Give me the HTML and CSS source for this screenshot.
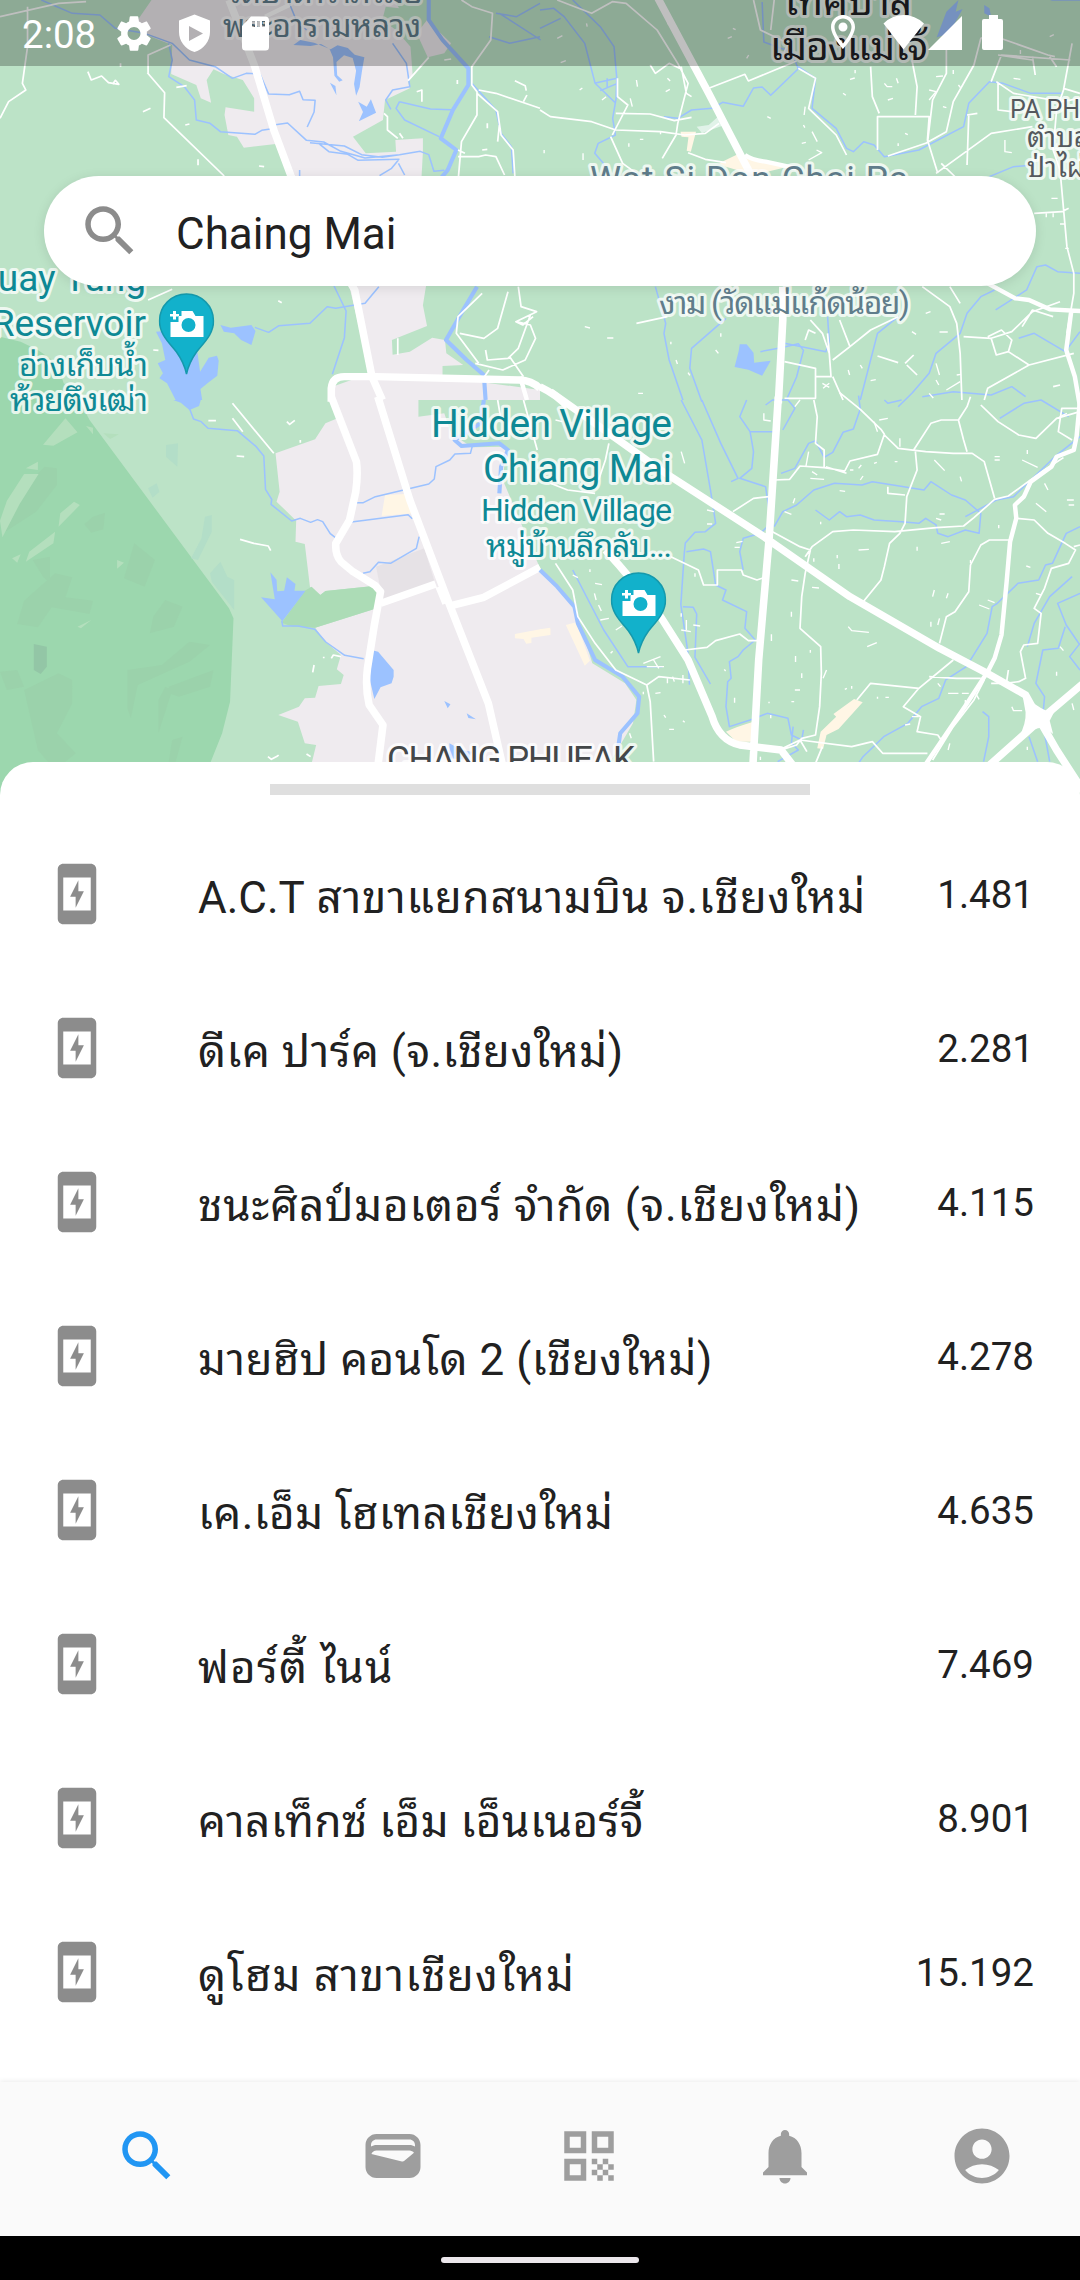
FILE: index.html
```html
<!DOCTYPE html>
<html lang="th">
<head>
<meta charset="utf-8">
<title>Charging stations</title>
<link rel="stylesheet" href="styles.css">
</head>
<body>
<svg class="defs" width="0" height="0" aria-hidden="true">
  <symbol id="i-search" viewBox="0 0 24 24"><path d="M15.5 14h-.79l-.28-.27C15.41 12.59 16 11.11 16 9.5 16 5.91 13.09 3 9.5 3S3 5.91 3 9.5 5.91 16 9.5 16c1.61 0 3.09-.59 4.23-1.57l.27.28v.79l5 4.99L20.49 19l-4.99-5zm-6 0C7.01 14 5 11.99 5 9.5S7.01 5 9.5 5 14 7.01 14 9.5 11.99 14 9.5 14z"/></symbol>
  <symbol id="i-charge" viewBox="0 0 24 24"><path d="M14.5 11l-3 6v-4h-2l3-6v4h2zM17 1H7c-1.1 0-2 .9-2 2v18c0 1.1.9 2 2 2h10c1.1 0 2-.9 2-2V3c0-1.1-.9-2-2-2zm0 17H7V6h10v12z"/></symbol>
  <symbol id="i-wallet" viewBox="0 0 24 24"><path fill-rule="evenodd" d="M18 4H6C3.79 4 2 5.79 2 8v8c0 2.21 1.79 4 4 4h12c2.21 0 4-1.79 4-4V8c0-2.21-1.79-4-4-4zm-1.86 9.77c-.24.2-.57.28-.88.2L4.15 11.25C4.45 10.52 5.16 10 6 10h12c.67 0 1.26.34 1.63.84l-3.49 2.93zM6 6h12c1.1 0 2 .9 2 2v.55c-.59-.34-1.27-.55-2-.55H6c-.73 0-1.41.21-2 .55V8c0-1.1.9-2 2-2z"/></symbol>
  <symbol id="i-qr" viewBox="0 0 24 24"><path fill-rule="evenodd" d="M3 11h8V3H3v8zm2-6h4v4H5V5zM3 21h8v-8H3v8zm2-6h4v4H5v-4zM13 3v8h8V3h-8zm6 6h-4V5h4v4zM19 19h2v2h-2zM13 13h2v2h-2zM15 15h2v2h-2zM13 17h2v2h-2zM15 19h2v2h-2zM17 17h2v2h-2zM17 13h2v2h-2zM19 15h2v2h-2z"/></symbol>
  <symbol id="i-bell" viewBox="0 0 24 24"><path d="M12 22c1.1 0 2-.9 2-2h-4c0 1.1.89 2 2 2zm6-6v-5c0-3.07-1.64-5.64-4.5-6.32V4c0-.83-.67-1.5-1.5-1.5s-1.5.67-1.5 1.5v.68C7.63 5.36 6 7.92 6 11v5l-2 2v1h16v-1l-2-2z"/></symbol>
  <symbol id="i-account" viewBox="0 0 24 24"><path fill-rule="evenodd" d="M12 2C6.48 2 2 6.48 2 12s4.480 10 10 10 10-4.480 10-10S17.520 2 12 2zM12 6c1.930 0 3.500 1.570 3.500 3.500S13.930 13 12 13s-3.500-1.570-3.500-3.500S10.070 6 12 6zM12 20c-2.030 0-4.430-.82-6.140-2.880C7.550 15.800 9.680 15 12 15s4.450.8 6.140 2.120C16.430 19.180 14.030 20 12 20z"/></symbol>
  <symbol id="i-gear" viewBox="0 0 24 24"><path d="M19.14 12.94c.04-.3.06-.61.06-.94 0-.32-.02-.64-.07-.94l2.030-1.580c.18-.14.23-.41.12-.61l-1.920-3.320c-.12-.22-.37-.29-.59-.22l-2.390.96c-.5-.38-1.030-.7-1.620-.94l-.36-2.540c-.04-.24-.24-.41-.48-.41h-3.840c-.24 0-.43.17-.47.41l-.36 2.540c-.59.24-1.130.57-1.620.94l-2.390-.96c-.22-.08-.47 0-.59.22L2.740 8.870c-.12.21-.08.47.12.61l2.030 1.580c-.05.3-.09.63-.09.94s.02.64.07.94l-2.030 1.580c-.18.14-.23.41-.12.61l1.920 3.320c.12.22.37.29.59.22l2.390-.96c.5.38 1.030.7 1.620.94l.36 2.540c.05.24.24.41.48.41h3.840c.24 0 .44-.17.47-.41l.36-2.540c.59-.24 1.130-.56 1.620-.94l2.390.96c.22.08.47 0 .59-.22l1.920-3.320c.12-.22.07-.47-.12-.61l-2.010-1.580zM12 15.600c-1.980 0-3.600-1.620-3.600-3.600s1.620-3.600 3.600-3.600 3.600 1.620 3.600 3.600-1.620 3.600-3.600 3.600z"/></symbol>
  <symbol id="pin" viewBox="0 0 56 82">
    <path class="pin-body" d="M28 1C13 1 1 13 1 28c0 13 9 21 17 31 5 7 8 13 10 22 2-9 5-15 10-22 8-10 17-18 17-31C55 13 43 1 28 1z"/>
    <path class="pin-glyph" fill-rule="evenodd" d="M23 18h11l3 5h8v21H12V29h8v-6h3zM30 25a7 7 0 1 0 0 14 7 7 0 0 0 0-14zM14.500 18h3v3h3v2.500h-3v3h-3v-3h-3V21h3z"/>
  </symbol>
</svg>

<main class="screen">
  <section class="map">
    <svg class="map-art" width="1080" height="830" viewBox="0 0 1080 830">
      <rect class="park" width="1080" height="830"/>

      <g transform="scale(.34439 .33333)">
        <path class="forest" d="M0 1010L60 1025 110 1050 165 1090 185 1150 250 1200H0z"/>
        <path class="town" d="M440 0L400 60 425 105 500 135 497 222 570 255 583 295 613 308 600 240 620 208 650 222 705 240 738 295V335L655 322 652 345 663 405 688 410 708 443 800 432 850 560 1010 840 1075 1120 965 1160 970 1200H1568V1170L1285 1130 1285 1098 1345 1095 1296 1060 1292 1020 1255 1013 1190 1055 1140 1064 1138 1020 1240 978 1228 916 1237 858 1215 700 1228 455V415L1148 420 1150 455 1062 460 1025 410 1112 360 1118 300 1190 265 1185 245 1245 170 1195 90 1145 0z"/>
        <path class="park" d="M1240 0L1250 60 1285 110 1330 170 1300 180 1245 172 1200 250 1192 140 1150 90 1110 60 1120 20 1160 25 1175 0z"/>
        <path class="town" d="M1210 100L1240 60 1310 130 1290 160 1242 172z"/>
        <path class="water" d="M852 135l20-15 40 8 48 20 20-12 30 8 20 20 28 8-6 35-8 55-10 25-6-35 6-40-10-38-25-8-22 20 2 40 16 15-10 4-14-18-4-55-10-25-25-15-30 6zM958 248l16 10 3 28zM1040 305l25 15 12-22 15 40-50 26 12-28z"/>
        <path class="town" d="M1005 190l18-15 5 30-18 8z"/>
        <path class="water" d="M640 975l30 8 60-8 12 18-12 42-30-15-20-20-30-5zM458 1090l22-10-10-50-17-35 60-5 60 65 8 60 25-42 24-6 5 15-4 45-25 20-24 20 5 33H510l-25-50-22-15 10-15zM360 860l45 30 10-20-50-20z"/>
        <path class="stream" d="M120 0l90 40 80 5 45 40 85 15 80 30 50 50 75 20 50 35 40-15 40 2 25 60 60 2 30-10 10 25 35 2-3 35-20 45M490 130l10 50-10 50 45 30 30 40 5 60 40 10 30 25 100 8 20-12 30-5 10-12 35-5 55 52 50 5 50 28 70 20 100-10 60-10 25 10 15 50 30-3M900 428l100 10 50 26 60 8 50-8M925 430l30 25 55 8 30 18 120-3M1157 480l-20 25-35 22M1157 490l18 35M870 510v20M1140 130l40 60 10 70-50 10-20 30 15 28M1160 305l-10 20 25 35 100 50M1160 305l90 22 60 2M840 10l20 50 30 30M1370 250l70 80 15 70 30 40 5 80M1450 40l120 80M970 858l35 75-5 80-35 110M1100 860l-40 50-85 15-25-5-50 50-90 7-30 20-40-15M1420 110l60 20 88-20M1440 40l60 10 68-40"/>
        <path class="river" d="M1245 0v60l40 60 75 85v50l-45 75-35 85 45 35-25 60-20 25M1385 860l-40 70-50 90 60 60 50 45 5 75"/>
        <path class="lane" d="M0 50L170 10 250 5M80 20v120l-15 110 10 20-50 35-25 50M430 220v-55l65-30M428 218l50 60-2 75 175 175M1340 0l30 20 60 20-5 80-55 80v55l15 20v70l-45 80-10 120M1390 270l50 10 128 45M1385 280l60 55 10 70 35 45 5 80M1330 470h60l20-5 30 5 25 55M1245 172l-60 70M1115 340l10 10v40l30 25M1160 400l10 15M1330 450l20 10M255 215l10 25 30-12 20 20 30 5-10-12-8 12M512 262l30-5M415 335l22-10M538 375l12-3M575 478v18M752 498l15 2M350 190v10M1210 275l15-5v35M1495 242l30 15 3 15M1520 305l10-20M1328 240v12M1290 180l20-3M1415 370v15M1450 375l-5 50M1400 450l15-2M430 900l70-32M808 902l10 6M1505 860l8 60 45 15-60 30 20 10 30-25M1500 965l40 10 15 40-30 65-65 30-80-20M1400 880l-70 70-5 50 65 90M1335 1000l70 15 40-30 30-110M1410 1050l5 30 60-5 30-30 35-100M1420 1110l-20 30M1155 1015v50M1480 1070l40 60M445 1050l15 1"/>
        <path class="highway" d="M665 0L740 200 795 390 845 528 920 680 1030 870 1080 1130 1110 1200"/>
        <path class="highway" d="M1568 1165q-25-24-60-25L1090 1130H1000q-35 0-38 35v40"/>
        <path class="road" d="M840 15l-70 35M1510 1130l20 70"/>
      </g>

      <g transform="translate(0 400) scale(.34439 .33333)">
        <path class="forest" d="M0 0H230L260 60 665 625 678 655 668 905 645 1000 612 1085V1220H0z"/>
        <path class="ridge" d="M130 200l35 5v50l-60 80-90 60v-80zM270 350l35-12-5 50-35 10-20-25zM95 480l50-10v80l-20-20zM160 520l50 12-20 60 80 10-10 40-110-20-40 60-60-10 20-70zM390 430l60 50-30 80-60-25zM370 810l100-15 80-70 60 10-60 50-150 70-20 100-10-30zM490 860l130-50-10 50-90 30-30-10zM0 815l50-5 20 50-50 10zM70 870l100-50 40 20v70l-45 90 55 60-60 50-50-60zM480 600l50 20-25 60-70 20 10-50zM460 900l20-40 20 10-40 130zM500 1020l30-10-20 75h-20z"/>
        <path class="dell" d="M98 732l38 8v60l-18 22-20-12z"/>
        <path class="meadow" d="M190 55l35 42-70 40-30-3zM75 205l35-20v25zM70 222h42l-55 90-50 100-7-50 20-60zM170 380l5-40 40-35 17 10zM160 395l-5 35-80 55 10-30zM35 475l25-12-10 25zM340 480l20 8-20 18zM225 680l40-20-30 25zM250 78l20 5v20zM300 100l45 3-25 14z"/>
        <path class="glade" d="M482 135l35-5-2 70-33-30zM430 265l25-15 8 25-20 18zM595 350l20-5v50l-40 85-20-5 30-60zM640 485l20 45 20 10v90l-65-85-5-25z"/>
        <path class="town" d="M965 0L980 55 945 70 915 118 800 160 812 275 803 305 860 362 858 425 885 432 900 560 930 585 945 573 1085 558 1100 570 1087 627 915 683 945 725 990 765 978 808 998 825 990 852 925 858 915 893 885 895 868 920 808 945 865 965 885 1030 918 1035 905 1090H1770L1838 970 1848 900 1815 850 1720 790 1668 620 1568 505 1460 240 1470 140 1370 142 1310 100 1290 40 1215 50V0z"/>
        <path class="grass" d="M818 668L885 572 905 560 930 585 945 573 1085 558 1100 570 1087 627 915 683 850 680z"/>
        <path class="block" d="M1092 500l140-55 30 100-150 60z"/>
        <path class="sand" d="M1118 285l60-3 22 58-92 8zM1495 702l73-14 30-5v22l-55 8v16l-15 2-8-14-25-2z"/>
        <path class="water" d="M503 0h80l-5 18-28 12-25-22zM785 517l18 22 2 35 20-2 8-40 25 20-3 20 32 0-67 92-62-72 40 6zM1078 750l20 5 45 55v20l-6 20-32 12-18 35-17-75zM1290 903l18 10-8 12zM1355 940l27 18-22-4zM1305 1030l35 20 30 5-10 25-55-5z"/>
        <path class="stream" d="M550 25l12 32 22 8 20 20 85 7 55 48 22 28 5 100 18 30-2 15 60 50 25-8 30 12 20-8 15 6 22 36 15 12M1030 308h25l35-18 155-38 16-15 5-37 40-20 15-18 45-2 5-20M1015 367l170-23 12 12M1217 410l-8 35-75 45-35-3-25 28-20 5M818 662l3 16h45l48 10 32 38 55 40 55 10"/>
        <path class="river" d="M1405 0l-10 70-75 50 20 18 110-8 25 20-20 50-5 80"/>
        <path class="lane" d="M675 10l120 150M675 55l30 40M605 62h22M687 168l22 2M833 65l8 8 15-12M872 120v8M697 418l40 12 42 8 7 14M940 770v5M962 775l6-10 22 5M912 795l-4 22M778 1070l10 8 18-10 3-3M890 1062l12 8M1445 0l10 60M1520 0l40 150"/>
        <path class="highway" d="M962-10L1035 185q5 40-2 90l-18 85-40 70q-2 35 15 55l35 30 65 42 15 18-18 100-20 130q-7 60 5 110l40 60-15 125"/>
        <path class="highway" d="M1097-10L1190 300 1300 600 1418 910 1460 1100M1105 610l160-58M1275 560l20 50M1310 617l95-25 163-90"/>
      </g>

      <g transform="translate(540 0) scale(.34439 .33333)">
        <path class="sand" d="M408 395h45l-15 60-12-3 5-40-20-2zM520 490l60-30 20 15 120 25-100 25-80-25z"/>
        <path class="snow" d="M455 380l35-5 30-28 10 30-60 22z"/>
        <path class="water" d="M1160 90l20-55 35-35-8 35 20-8-40 75-35 10zM1290 15l15 10 5 25-20-10zM1245 30l5 12M580 1033h20l20 25 2 30 48-6-25 45-40-18-40-8 12-48z"/>
        <path class="stream" d="M0 30l40-5 30 25 60 80 30 120 60 60M0 85l60-30M95 0l80 80 40 60 8 95-2 60-10 60 8 50-50 25-10 30 25 30 5 60M158 250l65-15M175 272l50-22M195 235v30M360 350l40 5 40-25 60-5 30-18 60 12 30-55 25-3 25 25 80-80-20-50-80-30-5-120M750 200l50 35-10 90 70 60 30 60 20 10 30-30 30 10 30 35 100-20 130-70 15-70 60-65 40 5 80 30h90M1568 0l-80 0-30-10M335 860l30 110-5 30 15 80 40 120M540 955l-100 90-5 60 35 100M835 950l5 75-10 30-120-25-15 5M640 1055l60-12 50-12 15 20-20 80-30 70M1040 950l-60 50-50 200M1320 870l-40 20-40 50-20 60-70 60-20 60-50 60-40 40M1568 820l-65-5-35-20-25 5-30 70-90 60M1305 530l70-30 60-5M1390 1015l45-15 90 55 43-60M1110 1190l90-15 110 10 60-25 40 30"/>
        <path class="lane" d="M50 0l100 40 60-35 40 5 90 80 60 100 30 60-15 60-15 60-5 35-40 70M220 340l100 2 70 20 50-10M0 330l30 20 120 15 70 25 130 5 70 10 60-5 40-30M490 265l105-42 10 20 140-60M320 195l15 25 40-30 30 15M440 290l-15-10-15-80M210 405l45-90-30-25 0-55M205 410l35 80 40 30M430 458l50 20 60 10M620 0l20 90 80 40-20 50M680 0l-10 90M980 450v-100l150 0-5 70 30 100M985 340l-20-50-5-90M1080 180l15 80-5 85M1180 150l0 70-40 80-15 130M1010 468l110-38 60-35 20-90 60-110 20-80 30-10 165 60 20 5M750 205l50 30-20 90 80 80 30 60M1310 245l30-80 200 15M1330 250v80l40 5M1325 245l50 35 140 25 53-10M1520 265l48 15M1150 520l80-60 80-60 120-20M1165 490l50 50M1245 345l-5 150M1270 340l-30 5M1545 130l-25 140-20 60-10 120 20 60 20 230 20 80v60l-20 120M1435 640l80-5 20-10M1330 165l100 15M1430 170l8 55M1480 170l20 30M1110 860l80 60 20 50 10 90 5 140M1190 860l30 50M1230 1010l80 5 60-20 60-60 80-30M1310 1015l15 50 35-10 60 40 130-35M1300 1010l40-20 30 30-10 35M1420 1095l-120 70-10 35M710 1085l90 20v90h-90M800 1130h45l-5-70-20-60-35-40M850 1130l30 70M840 1060l-5-60M870 960l30 80-50 40M900 1040l60-50 80-40M280 970l90-20M1490 1160l20-5M770 1020l10-30 20 10M1400 980l30-50 60 20M980 1068l60 20M1060 1090l25-25M1065 1095l30 30"/>
        <path class="tick" d="M50 115l15-8M135 70l2 10M115 270l8-6M60 188l15-6M180 300l12-10M365 275l12-7M370 235l8 8M280 240l3 20M262 295l6 25M290 418h10M258 430v10M12 450v10M125 460v20M350 395v8M370 70l15 10M560 85l8 4M545 115l12-5M600 175l6-10M660 350l10 5M770 320l-3 25M765 375l4 8M790 395l15 30M760 430l12-3M780 480l38-22-15-8M900 238l14-4M880 280l8 6M915 210v10M1000 250l8 10 15 0M1010 300l15-5M1035 235l5 15M1130 270l20 5-20 25M1040 430v8M1060 400l8 4M1150 230l20-2M1200 210v12M1215 255l6 8M1170 320l10 3M1350 420v35l20 3M1375 235l20 3M1395 150v12M1480 110l12-6M1485 595h18M1510 672h15M1470 640v12M1490 640v12M1525 745h10M130 980l15 4M195 1014h18M380 1025v8M395 1080l4 12M430 1118l5 8M285 1180h14M510 1050l8 10M525 1000v10M895 1110l4 15M930 1095l6 10M960 1142l15-3M1000 930l10-12M1080 995l12 8M1160 996h24M1120 940l14-5M1150 1140l8 15M1180 1170l40-25M1210 1125l12-2M1130 1180l12 14M820 1150l20 12M840 1150l-18 15M1150 1090l10 35"/>
        <path class="road" d="M595 465q20 15 60 20l90 20"/>
        <path class="highway" d="M340-10L490 280 600 500 670 640M705 860v100L692 1210M0 1160q50 25 80 60"/>
        <path class="avenue" d="M1300 850l80 45 40 5 60 28 90 5M1543 930l-15 120 25 80 15 90"/>
      </g>

      <g transform="translate(540 400) scale(.34439 .33333)">
        <path class="sand" d="M0 687h30v18H0zM75 675l30-8 40 115-15 15zM540 995q30-15 80-30v60h-50zM805 1045l10-50 45-45-8-8 60-45 25 10-70 80-35 18-10 42z"/>
        <path class="stream" d="M410 0l60 120 25 150 15 100-30 25-30 2-28 32-3 30-10 155 20 140 5 100M425 455l50-8 20 8 15 100 30 15-10 30 70 35-5 50 30 35-35 30-15 20-25 15 5 50-10 10-5 75 10 60 60-20 50-20 60 15 10 50 30 15 5-30M415 620l30 2 10 20-5 130 45 80M470 0l55 130 50 105-20 10M600 0l-20 50 30 45 10 60-5 50-35 30 75 25 10 70-5 50-20 20-50 15-10 40 10 55M610 95l80 0M700 220l40-15 40-75 20-8 25 50 25-15 30-60 30-10 20-60-5-40M655 15l20-15 45 0 20 25-35 65M680 380l25-45 40-20 50-45 60-20 80 5 30-10 60 10 90 15 20-25 60 40 40 15 45 40-5 60-40-10-50 20-30-10-5-25-30-20-20 15-50-5-80-5-40-15-40 5-20-15-30 25-40-30M1235 350l90-50 50-10 50-50 70-70 73-60M1335 55l70-45 50-10 80 50M1568 380l-40 20-40 90-20 5-20 45-60 10-60 60-15 10-15 80-60 100-60 40-20 55-50 25-40 50-70 40-60 60-40 60-50 35M1545 530l-65 60-45 80-20 70M1568 580l-65 30 25 65 40 60M1525 680l-20 65-45 5-20 100 25 40-5 60M1568 730l-30 40 30 40M1285 935l18 15v60l-15 75M1420 1010l25 75M1465 1000l15 85M95 510l90 180 70 110 100 0M735 980l-5 50 20 20-60 35M1000 0l10 10 40-10"/>
        <path class="river" d="M0 510l50 50 50 60 10 50 50 110 80 50 48 60-5 50-50 60-10 70"/>
        <path class="lane" d="M45 490l50 80 15 80 50 80 60 80 90 45 35-25 90 10M310 855l10 50 10 180M420 750l65-8 25-20 70-20 25 20 35 0M380 470l80 40 15 45h40v-45h70l5 15 40 15 15-5M560 335l60-40 45-5M675 395l80 45 30 10M770 470l20-30 60-45 60-5 120 5 120-12 80-5 30-25 60-55 40-10 100-75 60-40M785 450l-15 70-10 70-5 95 60 55 2 80-5 100-12 85-40 10-15 20-60 20M680 240l45-2 30-40 70 5 60 10 15-30 80-20 20-60-10-15-60-60-60-50M795 0l10 50-5 80 25 20v50M1000 105l40 40 80 10 80 5h55l35 25 30 110M1085 150l50-80 30-10h50l15 60 10 35M1215 60l25-40 10-30M1280 15l50 50 60 40 50 10 60-60 68-20M1090 155l5 55-30 80-5 80-15 30-30 30-15 70-10 40-55 70M1365 420h-60l-25 15-30 60-5 80-40 60-25 15-20 80M1385 355l50 5 40 40 50 30 30 20-20 40-50 15-20 60-30 60 20 15-10 90-40 5-10 20 15 80-20 10-40 5-40 0M1550 440l18-5M1200 780l-100 85-140-15-40 50M1100 865l-45 55 50 30-10 45 60 10 10 15M1360 810l-5 35M1290 840l-30 60-60 80-60 100M1130 830l80 5 70 0M755 1020l150 20 60-15 30 35 130 0M820 1040l-20 50M705 1045l50-25 20 35M1010 260v20l50 5M830 200l60 20M1545 120l-40-25 10-70 50 0M30 250l50 20 80 10M170 240l20-60 10-50"/>
        <path class="tick" d="M45 60l20 5M650 40v20l20 3M780 155l-8 45M410 155l10 35M485 330l20 5M485 372h15M570 428l18-4M565 442h15M740 295l-5 15M710 335l20 8M785 235l40 3M870 272l16 2M930 240l8-12M925 205l8-10M970 190l8-3M1030 185h8M1145 180l30 32M1220 230l4 14M1320 170h15M1320 180h15M1400 180l45 22M1465 250l10 20M1530 300h20M1535 315h16M1440 310l30 25M1150 355l15 5M1160 342h15M1332 375v10M1165 430l25-5M1095 440v12M1250 480v10M925 450l30-2M795 475v10M863 465v10M868 492v15M790 562l20 2M730 540l20 3M1412 498l12 4M1300 600l20 8M1275 615l30 12M1145 570l-5 20M1185 580l-5 15M1160 655l-5 20M1135 665v15M730 635v15M672 703v20M895 680l10 12 50 5M950 740l28-12M742 768v18M760 820v14M832 810l-10 25M740 870h15M785 750v8M905 858v8M885 868l6-3M980 890v6M1003 892h10M565 893v15M535 808l4 5M665 905v5M730 905h8M450 520v10M410 640v10M410 690l28 5M425 660v30M445 675l20 3M175 660l25-5M220 690l18-12M145 508v8M95 525l15 8M160 550l20 4M158 580l5 20M170 615l8 18M300 790l50-20M310 800h50M330 780l15 25M205 760l6-6M260 1000l5 15M335 880l15-2M300 875v8M360 945l5 8M415 962l5 5M375 988h14M370 835v15M415 825v25M385 830l5 15M640 1070v10M670 945v10M1185 880h30M1225 880h20M1235 900v20M1265 880l10 18M1370 920l5 12h25M1415 1040v10M1545 910l5 20M1500 815v12M1510 740l10 12M1060 975l15-3M1080 950h20M1190 1030l-5 20M1155 850l8 10M1440 580l15 5M1510 50l20-10M1415 150v12M790 215l15 10M815 365v8M900 210l10 0M970 65l10 30M985 60l25-5M1045 115v25M740 20l15-20"/>
        <path class="highway" d="M30-25L350 210 650 410 900 590 1160 745 1290 815 1410 885 1450 960 1500 1050 1600 1210M692-10L665 420 635 780 618 1100M190 450q80 90 160 200l80 130 70 170q20 70 80 85l120 15 45 60"/>
        <path class="avenue" d="M1568 0l-10 110-8 40-50 20-15 30-60 45-20 45-26 25 4 40-18 70-10 120-15 160-20 70-20 40-60 95-125 190"/>
        <path class="highway" d="M1600 830l-120 105-60 55-120 110"/>
        <path class="junction" d="M1400 880q40 40 70 52l30-10-20 40 10 40q-30-25-50-15-25 5-50 25 22-40 20-75z"/>
      </g>

      <g class="label temple">
        <text x="225" y="3" textLength="197">วัดป่าดาราภิรมย์</text>
        <text x="223" y="37" textLength="198">พระอารามหลวง</text>
        <text x="590" y="191" font-size="35" textLength="318">Wat Si Don Chai Pa</text>
        <text x="659" y="314" textLength="251">งาม (วัดแม่แก้ดน้อย)</text>
      </g>
      <g class="label city">
        <text x="785" y="15" textLength="127">เทศบาล</text>
        <text x="770" y="60" textLength="158">เมืองแม่โจ้</text>
      </g>
      <g class="label district">
        <text x="1010" y="118">PA PHAI</text>
        <text x="1027" y="147" class="th">ตำบล</text>
        <text x="1027" y="177" class="th">ป่าไผ่</text>
      </g>
      <text class="label ward" x="387" y="771" textLength="248">CHANG PHUEAK</text>
      <g class="label place" text-anchor="end">
        <text x="146" y="291" font-size="37">Huay Tung</text>
        <text x="146" y="336" font-size="37">Reservoir</text>
        <text x="148" y="376" font-size="32" textLength="129">อ่างเก็บน้ำ</text>
        <text x="148" y="411" font-size="32" textLength="138">ห้วยตึงเฒ่า</text>
        <text x="672" y="437" font-size="39" textLength="241">Hidden Village</text>
        <text x="672" y="482" font-size="39" textLength="189">Chiang Mai</text>
        <text x="672" y="521" font-size="32" textLength="191">Hidden Village</text>
        <text x="672" y="557" font-size="32" textLength="186">หมู่บ้านลึกลับ...</text>
      </g>
      <use href="#pin" x="158.500" y="293" width="56" height="82"/>
      <use href="#pin" x="610.500" y="572" width="56" height="82"/>
    </svg>
  </section>

  <header class="overlay">
    <div class="status-bar">
      <span class="clock">2:08</span>
      <svg class="status-left" width="170" height="66" viewBox="110 0 170 66">
        <use href="#i-gear" x="112.500" y="12" width="43" height="43"/>
        <path fill-rule="evenodd" d="M194.500 14.500L210 20.500V32c0 9-6 17-15.500 20C185 49 179 41 179 32V20.500zM189 26v15l14-7.500z"/>
        <path fill-rule="evenodd" d="M251 16.500h14a4 4 0 0 1 4 4V47a3.500 3.500 0 0 1-3.500 3.500h-20A3.500 3.500 0 0 1 242 47V26zM252 21v6h3v-6zM257 21v6h3v-6zM262 21v6h3v-6z"/>
      </svg>
      <svg class="status-right" width="180" height="66" viewBox="828 0 180 66">
        <path fill-rule="evenodd" d="M843 15c-6.700 0-12 5.300-12 12 0 9 12 22 12 22s12-13 12-22c0-6.700-5.300-12-12-12zm0 3.500c4.700 0 8.500 3.800 8.500 8.500 0 5.500-5 12.500-8.500 16.500-3.500-4-8.500-11-8.500-16.500 0-4.700 3.800-8.500 8.500-8.500zM843 22.500a4.500 4.500 0 1 0 0 9 4.500 4.500 0 0 0 0-9z"/>
        <path d="M883.500 23.500Q892 15 903.500 15t20.500 8.500L903.500 49.500zM928 50h34V16zM989 15h9v4h3q2 0 2 2v27q0 2-2 2h-17q-2 0-2-2V21q0-2 2-2h5z"/>
      </svg>
    </div>
    <div class="search">
      <svg class="icon"><use href="#i-search"/></svg>
      <span>Chaing Mai</span>
    </div>
  </header>

  <section class="sheet">
    <div class="handle"></div>
    <ul class="stations">
      <li><svg class="icon"><use href="#i-charge"/></svg><span class="name"><span class="latin">A.C.T</span> สาขาแยกสนามบิน จ.เชียงใหม่</span><span class="dist">1.481</span></li>
      <li><svg class="icon"><use href="#i-charge"/></svg><span class="name tight">ดีเค ปาร์ค (จ.เชียงใหม่)</span><span class="dist">2.281</span></li>
      <li><svg class="icon"><use href="#i-charge"/></svg><span class="name">ชนะศิลป์มอเตอร์ จำกัด (จ.เชียงใหม่)</span><span class="dist">4.115</span></li>
      <li><svg class="icon"><use href="#i-charge"/></svg><span class="name tight">มายฮิป คอนโด 2 (เชียงใหม่)</span><span class="dist">4.278</span></li>
      <li><svg class="icon"><use href="#i-charge"/></svg><span class="name tight">เค.เอ็ม โฮเทลเชียงใหม่</span><span class="dist">4.635</span></li>
      <li><svg class="icon"><use href="#i-charge"/></svg><span class="name loose">ฟอร์ตี้ ไนน์</span><span class="dist">7.469</span></li>
      <li><svg class="icon"><use href="#i-charge"/></svg><span class="name tight">คาลเท็กซ์ เอ็ม เอ็นเนอร์จี้</span><span class="dist">8.901</span></li>
      <li><svg class="icon"><use href="#i-charge"/></svg><span class="name loose">ดูโฮม สาขาเชียงใหม่</span><span class="dist">15.192</span></li>
    </ul>
  </section>

  <nav class="tabs">
    <svg class="icon active"><use href="#i-search"/></svg>
    <svg class="icon"><use href="#i-wallet"/></svg>
    <svg class="icon"><use href="#i-qr"/></svg>
    <svg class="icon"><use href="#i-bell"/></svg>
    <svg class="icon"><use href="#i-account"/></svg>
  </nav>
  <div class="gesture-bar"><span></span></div>
</main>
</body>
</html>
```
FILE: styles.css
```css
* { box-sizing: border-box; }

body {
  margin: 0;
  background: #fff;
  font-family: Roboto, "Noto Sans Thai Looped", "Noto Sans Thai", "Noto Sans", sans-serif;
  color: #212121;
}

.defs { position: absolute; }

.screen {
  width: 1080px;
  height: 2280px;
  display: grid;
  grid-template-rows: 762px 1320px 154px 44px;
  position: relative;
  overflow: hidden;
}

.icon { width: 66px; height: 66px; flex: none; display: block; }

/* Map */
.map { height: 830px; }
.map-art { display: block; }
.park { fill: #bce3c7; }
.town { fill: #efebef; }
.forest { fill: #9cd7ae; }
.ridge { fill: #9bd2ab; }
.dell { fill: #93c6a6; }
.meadow { fill: #b4dfbd; }
.glade { fill: #b3dec8; }
.grass { fill: #acdcb6; }
.block { fill: #e6e2e6; }
.sand { fill: #fff6e5; }
.snow { fill: #e1f3e9; }
.water { fill: #9cc2ff; }
.stream, .river, .lane, .tick, .road, .avenue, .highway {
  fill: none;
  stroke: #fff;
  stroke-linejoin: round;
}
.stream { stroke: #9cc2ff; stroke-width: 4.500; }
.river { stroke: #9cc2ff; stroke-width: 12; }
.lane { stroke-width: 5; }
.tick { stroke-width: 4; }
.road, .avenue { stroke-width: 13; }
.highway { stroke-width: 22; }
.junction { fill: #fff; }

.label {
  stroke: rgba(255, 255, 255, .75);
  stroke-width: 6px;
  stroke-linejoin: round;
  paint-order: stroke;
}
.temple { fill: #607d8b; font-size: 32px; }
.city { fill: #202124; font-size: 39px; }
.district { fill: #55595e; font-size: 25px; }
.district .th { font-size: 28px; }
.ward { fill: #444749; font-size: 35px; }
.place { fill: #0e8995; }
.pin-body { fill: #12b1cb; stroke: #1599ac; stroke-width: 1.500; }
.pin-glyph { fill: #fff; }

/* Status bar and search field float over the map */
.overlay { position: absolute; inset: 0 0 auto; }

.status-bar {
  height: 66px;
  display: flex;
  align-items: center;
  padding: 0 72px 0 22px;
  background: rgba(0, 0, 0, .25);
  color: #fff;
  fill: #fff;
}
.clock { width: 88px; font-size: 38.500px; line-height: 66px; padding-top: 3px; }
.status-right { margin-left: auto; }

.search {
  height: 110px;
  margin: 110px 44px 0;
  padding-left: 33px;
  display: flex;
  align-items: center;
  gap: 33px;
  border-radius: 55px;
  background: #fff;
  font-size: 44px;
  box-shadow: 0 2px 12px rgba(0, 0, 0, .1);
}
.search .icon { fill: #8c8c8c; }
.search span { padding-top: 5px; }

/* Results sheet */
.sheet {
  position: relative;
  padding-top: 22px;
  border-radius: 33px 33px 0 0;
  background: #fff;
}
.handle { width: 540px; height: 11px; margin: 0 auto 22px; background: #dfdfdf; }
.stations { list-style: none; margin: 0; padding: 0; }
.stations li {
  height: 154px;
  padding: 0 46px 0 44px;
  display: flex;
  align-items: center;
}
.stations .icon { fill: #8c8c8c; margin-right: 88px; }
.name { font-size: 44px; line-height: 66px; white-space: nowrap; padding-top: 7px; letter-spacing: .8px; }
.name.tight { letter-spacing: .5px; }
.name.loose { letter-spacing: 1.200px; }
.latin { letter-spacing: 0; }
.dist { margin-left: auto; font-size: 38.500px; line-height: 50px; padding-top: 2px; }

/* Bottom navigation */
.tabs {
  position: relative;
  display: flex;
  align-items: center;
  padding: 0 65px 6px 114px;
  gap: 130.250px;
  background: #fafafa;
  fill: #9e9e9e;
  box-shadow: 0 -1px 5px rgba(0, 0, 0, .08);
}
.tabs .active { fill: #2196f3; margin-right: 49.500px; }

.gesture-bar {
  position: relative;
  background: #000;
  padding-top: 21px;
}
.gesture-bar span {
  display: block;
  width: 198px;
  height: 6px;
  margin: 0 auto;
  border-radius: 3px;
  background: #ebe7eb;
}
```
